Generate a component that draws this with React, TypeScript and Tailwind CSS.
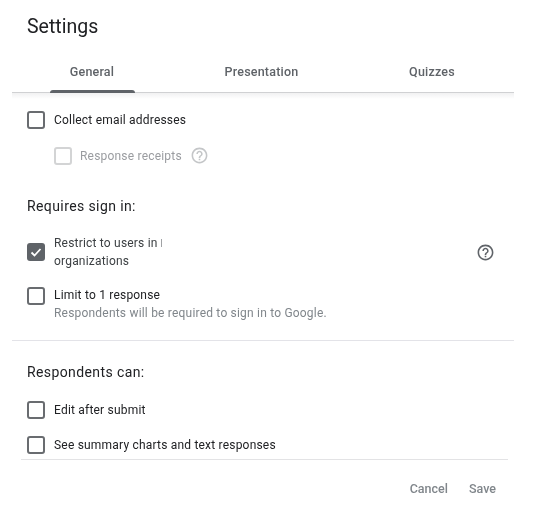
import { ReactNode } from 'react';

function Box({ checked, disabled }: { checked?: boolean; disabled?: boolean }) {
  if (checked) {
    return (
      <div className="flex h-[18px] w-[18px] shrink-0 items-center justify-center rounded-[3px] bg-[#5f6368]">
        <svg viewBox="0 0 18 18" className="h-[18px] w-[18px]" fill="none">
          <path d="M4.5 9.5l3 3 6-6.5" stroke="#fff" strokeWidth="1.8" />
        </svg>
      </div>
    );
  }
  return (
    <div
      className={`h-[18px] w-[18px] shrink-0 rounded-[3px] border-2 ${
        disabled ? 'border-[#d3d4d5]' : 'border-[#696c70]'
      }`}
    />
  );
}

function Help({ muted }: { muted?: boolean }) {
  return (
    <svg viewBox="0 0 24 24" className="h-[19px] w-[19px] shrink-0" fill={muted ? '#c4c6c8' : '#5f6368'}>
      <path d="M11 18h2v-2h-2v2zm1-16C6.48 2 2 6.48 2 12s4.48 10 10 10 10-4.48 10-10S17.52 2 12 2zm0 18c-4.41 0-8-3.59-8-8s3.59-8 8-8 8 3.59 8 8-3.59 8-8 8zm0-14c-2.21 0-4 1.79-4 4h2c0-1.1.9-2 2-2s2 .9 2 2c0 2-3 1.75-3 5h2c0-2.25 3-2.5 3-5 0-2.21-1.79-4-4-4z" />
    </svg>
  );
}

function Row({ label, className }: { label: ReactNode; className: string }) {
  return (
    <div className={`flex items-center gap-[9px] pl-[27px] ${className}`}>
      <Box />
      <span className="text-[12px] leading-[16px] tracking-[0.2px] text-[#202124]">{label}</span>
    </div>
  );
}

function Heading({ text, className }: { text: string; className: string }) {
  return (
    <div className={`pl-[27px] text-[14px] leading-[18px] tracking-[0.4px] text-[#202124] ${className}`}>
      {text}
    </div>
  );
}

export default function App() {
  return (
    <div className="h-[516px] w-[548px] overflow-hidden bg-white font-['Roboto',sans-serif] blur-[0.4px]">
      <div className="pt-[14px] pl-[27px] text-[19.5px] leading-[26px] text-[#202124]">Settings</div>

      {/* tabs */}
      <div className="relative mt-[17px] ml-[12px] grid h-[36px] w-[502px] grid-cols-[160px_179px_162px] border-b border-[#d0d1d3] pb-[5px] text-center text-[12.5px] font-medium tracking-[0.2px] text-[#5f6368]">
        <div className="flex items-center justify-center">General</div>
        <div className="flex items-center justify-center">Presentation</div>
        <div className="flex items-center justify-center">Quizzes</div>
        <div className="absolute -bottom-px left-[38px] h-[3px] w-[85px] rounded-t-sm bg-[#5f6368]" />
      </div>
      <div className="ml-[12px] h-[6px] w-[502px] bg-gradient-to-b from-[#f1f1f2] to-white" />

      <Row label="Collect email addresses" className="mt-[12px]" />
      <div className="mt-[17px] flex items-center gap-[8px] pl-[54px]">
        <Box disabled />
        <span className="text-[12px] leading-[16px] tracking-[0.2px] text-[#9a9ca0]">Response receipts</span>
        <Help muted />
      </div>

      <Heading text="Requires sign in:" className="mt-[32px]" />

      <div className="mt-[19px] flex items-center pr-[53px] pl-[27px]">
        <Box checked />
        <div className="ml-[9px] flex-1 text-[12px] leading-[18px] tracking-[0.2px] text-[#3c4043]">
          <div className="flex items-center">
            Restrict to users in
            <span className="ml-[3px] h-[8px] w-px bg-[#a0a2a5]" />
          </div>
          <div>organizations</div>
        </div>
        <Help />
      </div>

      <div className="mt-[17px] flex gap-[9px] pl-[27px]">
        <Box />
        <div>
          <div className="text-[12px] leading-[17px] tracking-[0.2px] text-[#202124]">Limit to 1 response</div>
          <div className="mt-px text-[12px] leading-[17px] tracking-[0.2px] text-[#80868b]">
            Respondents will be required to sign in to Google.
          </div>
        </div>
      </div>

      <div className="mt-[18px] ml-[12px] h-px w-[502px] bg-[#e3e3e8]" />

      <Heading text="Respondents can:" className="mt-[22px]" />

      <Row label="Edit after submit" className="mt-[20px]" />
      <Row label="See summary charts and text responses" className="mt-[17px]" />

      <div className="mt-[5px] ml-[21px] h-px w-[487px] bg-[#e3e3e5]" />

      <div className="mt-[20px] flex justify-end gap-[21px] pr-[52px] text-[12.5px] leading-[18px] font-medium text-[#80868b]">
        <span>Cancel</span>
        <span>Save</span>
      </div>
    </div>
  );
}
